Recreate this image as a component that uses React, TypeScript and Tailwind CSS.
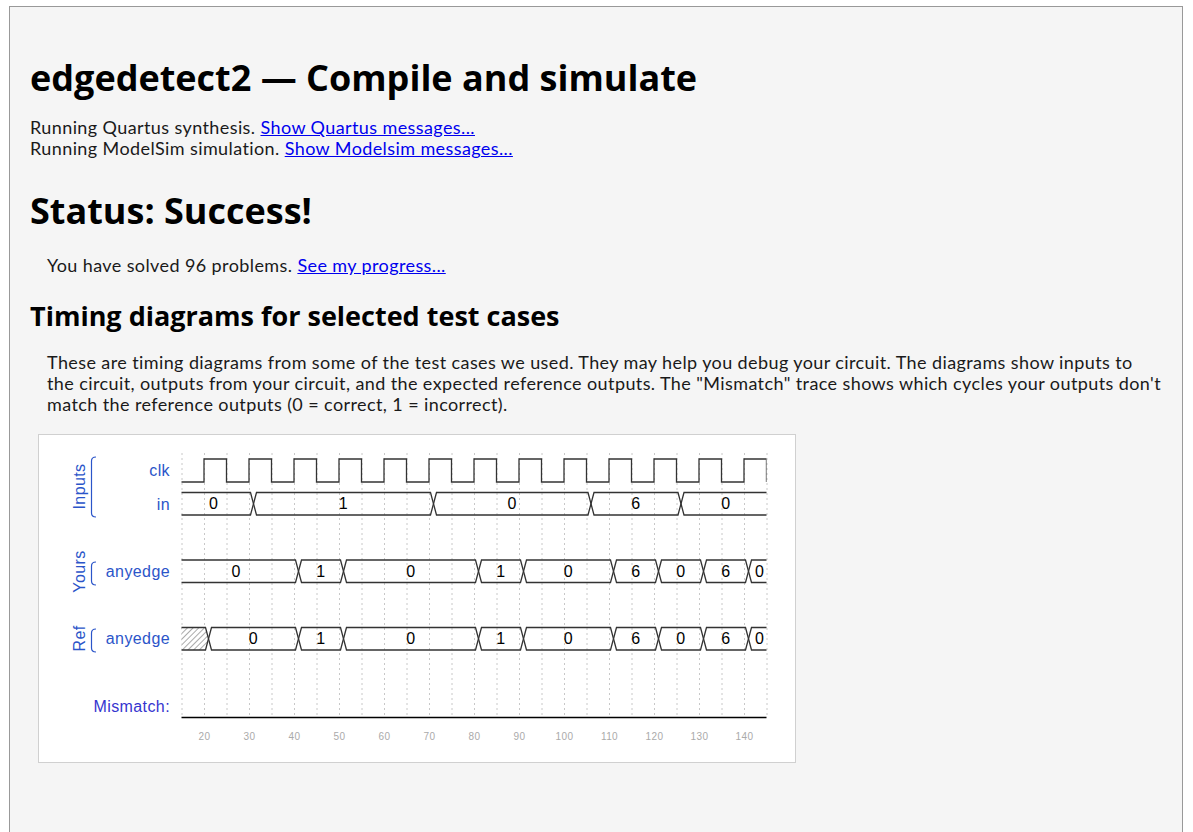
import React from "react";

const X = (t: number) => 204 + (t - 20) * 4.5;
const T0 = 13.3;
const T1 = 146;

type Seg = { s: number; e: number; v: string; hatch?: boolean };

function segs(list: [number, string][], end = T1): Seg[] {
  return list.map(([s, v], i) => ({ s, e: i + 1 < list.length ? list[i + 1][0] : end, v }));
}

const inSegs = segs([[T0, "0"], [31, "1"], [71, "0"], [106, "6"], [126, "0"]]);
const yoursSegs = segs([[T0, "0"], [41, "1"], [51, "0"], [81, "1"], [91, "0"], [111, "6"], [121, "0"], [131, "6"], [141, "0"]]);
const refSegs: Seg[] = [
  { s: T0, e: 21, v: "", hatch: true },
  ...segs([[21, "0"], [41, "1"], [51, "0"], [81, "1"], [91, "0"], [111, "6"], [121, "0"], [131, "6"], [141, "0"]]),
];

const D = 3;

function Bus({ list, top, bot }: { list: Seg[]; top: number; bot: number }) {
  const mid = (top + bot) / 2;
  return (
    <g>
      {list.map((g, i) => {
        const a = X(g.s);
        const b = X(g.e);
        const d = `M ${a} ${mid} L ${a + D} ${top} L ${b - D} ${top} L ${b} ${mid} L ${b - D} ${bot} L ${a + D} ${bot} Z`;
        return (
          <g key={i}>
            <path d={d} fill={g.hatch ? "url(#hatch)" : "none"} stroke="#333" strokeWidth={1.3} />
            {g.v && (
              <text x={(a + b) / 2} y={mid + 5.5} textAnchor="middle" fontSize={16} fill="#000" fontFamily="'Liberation Sans', Arial, sans-serif">
                {g.v}
              </text>
            )}
          </g>
        );
      })}
    </g>
  );
}

function Clock() {
  const hi = 459;
  const lo = 482;
  let d = `M ${X(14)} ${lo}`;
  for (let t = 20; t <= 140; t += 10) {
    d += ` L ${X(t)} ${lo} L ${X(t)} ${hi} L ${X(t + 5)} ${hi} L ${X(t + 5)} ${lo}`;
  }
  return <path d={d} fill="none" stroke="#333" strokeWidth={1.3} />;
}

function Brace({ y1, y2 }: { y1: number; y2: number }) {
  return (
    <path
      d={`M 96 ${y1} Q 91.5 ${y1} 91.5 ${y1 + 4} L 91.5 ${y2 - 4} Q 91.5 ${y2} 96 ${y2}`}
      fill="none"
      stroke="#2b55c9"
      strokeWidth={1.2}
    />
  );
}

function Diagram() {
  const grid: number[] = [];
  for (let t = 15; t <= 145; t += 5) grid.push(t);
  const ticks: number[] = [];
  for (let t = 20; t <= 140; t += 10) ticks.push(t);
  const lab = "#2b55c9";
  const font = "'Liberation Sans', Arial, sans-serif";
  return (
    <div className="ml-[8px] mt-[19px] w-[758px] border border-[#d0d0d0] bg-white">
      <svg width={756} height={327} viewBox="39 435 756 327" className="block">
        <defs>
          <clipPath id="waveclip">
            <rect x={X(15)} y={440} width={X(145) - X(15)} height={300} />
          </clipPath>
          <pattern id="hatch" patternUnits="userSpaceOnUse" width={4} height={4} patternTransform="rotate(45)">
            <rect width={4} height={4} fill="#fff" />
            <line x1={0} y1={0} x2={0} y2={4} stroke="#555" strokeWidth={1} />
          </pattern>
        </defs>
        {grid.map((t) => (
          <line key={t} x1={X(t) + 0.5} y1={453} x2={X(t) + 0.5} y2={717} stroke="#c8c8c8" strokeWidth={1} strokeDasharray="2 3" />
        ))}
        <g clipPath="url(#waveclip)">
          <Clock />
          <Bus list={inSegs} top={492.5} bot={515} />
          <Bus list={yoursSegs} top={560} bot={582.5} />
          <Bus list={refSegs} top={627.5} bot={650} />
        </g>
        <line x1={X(15)} y1={717.5} x2={X(145)} y2={717.5} stroke="#000" strokeWidth={1.5} />
        <g fontFamily={font} fontSize={16} fill={lab} textAnchor="end">
          <text x={170} y={476}>clk</text>
          <text x={170} y={510}>in</text>
          <text x={170} y={577}>anyedge</text>
          <text x={170} y={644}>anyedge</text>
          <text x={170} y={712} fill="#3535cf">Mismatch:</text>
        </g>
        <g fontFamily={font} fontSize={16} fill={lab} textAnchor="middle">
          <text transform="translate(85 486.5) rotate(-90)">Inputs</text>
          <text transform="translate(85 571.5) rotate(-90)">Yours</text>
          <text transform="translate(85 638.5) rotate(-90)">Ref</text>
        </g>
        <Brace y1={457} y2={517} />
        <Brace y1={562} y2={585} />
        <Brace y1={629} y2={652} />
        <g fontFamily={font} fontSize={10} fill="#aaa" textAnchor="middle">
          {ticks.map((t) => (
            <text key={t} x={X(t) + 0.5} y={740}>
              {t}
            </text>
          ))}
        </g>
      </svg>
    </div>
  );
}

export default function App() {
  const body = { fontFamily: "Lato, 'Noto Sans', sans-serif" };
  const head = { fontFamily: "'Open Sans', 'Noto Sans', sans-serif" };
  return (
    <div className="min-h-screen bg-white pt-[6px] pl-[9px] pr-[10px]">
      <div
        className="min-h-[830px] border border-[#999] bg-[#f5f5f5] px-[20px] pt-[47px] text-[18px] leading-[21px] tracking-[0.4px] text-[#1a1a1a]"
        style={body}
      >
        <h1 className="text-[36px] font-bold leading-[48px] tracking-normal text-black" style={head}>
          edgedetect2 — Compile and simulate
        </h1>
        <div className="mt-[15px]">
          Running Quartus synthesis. <a href="#" className="text-[#0000ee] underline">Show Quartus messages...</a>
          <br />
          Running ModelSim simulation. <a href="#" className="text-[#0000ee] underline">Show Modelsim messages...</a>
        </div>
        <h2 className="mt-[28px] text-[36px] font-bold leading-[48px] tracking-normal text-black" style={head}>
          Status: Success!
        </h2>
        <p className="ml-[17px] mt-[20px]">
          You have solved 96 problems. <a href="#" className="text-[#0000ee] underline">See my progress...</a>
        </p>
        <h3 className="mt-[22px] text-[27px] font-bold leading-[36px] tracking-normal text-black" style={head}>
          Timing diagrams for selected test cases
        </h3>
        <p className="ml-[17px] mt-[18px] whitespace-nowrap">
          These are timing diagrams from some of the test cases we used. They may help you debug your circuit. The diagrams show inputs to
          <br />
          the circuit, outputs from your circuit, and the expected reference outputs. The "Mismatch" trace shows which cycles your outputs don't
          <br />
          match the reference outputs (0 = correct, 1 = incorrect).
        </p>
        <Diagram />
      </div>
    </div>
  );
}
